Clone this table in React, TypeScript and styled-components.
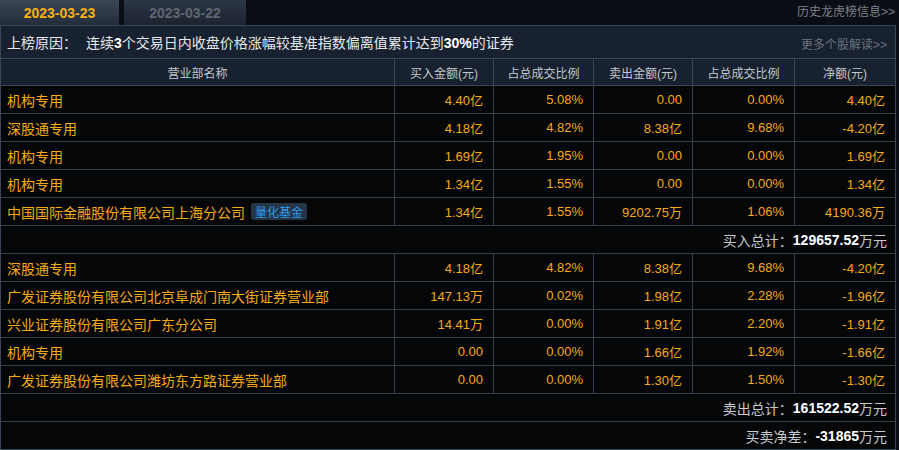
import React from "react";
import styled, { createGlobalStyle } from "styled-components";

const GlobalStyle = createGlobalStyle`
  html, body {
    margin: 0;
    padding: 0;
    background: #0a0d13;
  }
  body {
    font-family: "Liberation Sans", "Noto Sans CJK SC", sans-serif;
  }
`;

const Page = styled.div`
  width: 899px;
  height: 450px;
  background: #0a0d13;
  overflow: hidden;
`;

const TabBar = styled.div`
  height: 25px;
  display: flex;
  align-items: stretch;
  gap: 5px;
`;

const Tab = styled.div<{ active?: boolean }>`
  width: ${p => (p.active ? 119 : 122)}px;
  display: flex;
  align-items: center;
  justify-content: center;
  font-size: 14px;
  font-weight: bold;
  color: ${p => (p.active ? "#f5b014" : "#5f6670")};
  background: ${p =>
    p.active
      ? "linear-gradient(#3a4556, #232c3a)"
      : "linear-gradient(#2c3645, #1c2330)"};
`;

const HistoryLink = styled.a`
  margin-left: auto;
  padding-right: 4px;
  align-self: center;
  font-size: 12px;
  color: #7c828c;
  text-decoration: none;
  margin-top: -4px;
`;

const Panel = styled.div`
  width: 896px;
  box-sizing: border-box;
  border: 1px solid #3a4658;
  border-bottom: none;
  background: #040607;
`;

const ReasonRow = styled.div`
  height: 32px;
  display: flex;
  align-items: center;
  padding: 0 6px;
  background: #182130;
  border-bottom: 1px solid #3a4658;
  font-size: 14px;
  color: #e6e8ea;
`;

const ReasonLabel = styled.span`
  margin-right: 9px;
`;

const Strong = styled.b`
  color: #ffffff;
`;

const MoreLink = styled.a`
  margin-left: auto;
  font-size: 12px;
  color: #6a717c;
  text-decoration: none;
  padding-right: 2px;
  margin-top: 2px;
`;

const Grid = styled.div`
  display: grid;
  grid-template-columns: 394px 99px 100px 99px 102px 100px;
`;

const HeadCell = styled.div<{ last?: boolean }>`
  height: 26px;
  display: flex;
  align-items: center;
  justify-content: center;
  font-size: 12px;
  color: #c3c7cc;
  background: #182130;
  border-bottom: 1px solid #3a4658;
  border-right: ${p => (p.last ? "none" : "1px solid #3a4658")};
`;

const Cell = styled.div<{ last?: boolean; name?: boolean }>`
  height: 27px;
  display: flex;
  align-items: center;
  justify-content: ${p => (p.name ? "flex-start" : "flex-end")};
  padding: ${p => (p.name ? "0 0 0 6px" : "0 10px 0 0")};
  font-size: ${p => (p.name ? 14 : 13)}px;
  color: #f5aa18;
  border-bottom: 1px solid #343f4e;
  border-right: ${p => (p.last ? "none" : "1px solid #343f4e")};
`;

const Badge = styled.span`
  margin-left: 6px;
  height: 17px;
  padding: 0 4px;
  display: inline-flex;
  align-items: center;
  border-radius: 3px;
  background: #263546;
  color: #2c9ae8;
  font-size: 12px;
`;

const SummaryRow = styled.div`
  grid-column: 1 / -1;
  height: 27px;
  display: flex;
  align-items: center;
  justify-content: flex-end;
  padding-right: 8px;
  font-size: 14px;
  color: #c8cacd;
  border-bottom: 1px solid #343f4e;
`;

const Total = styled.b`
  color: #ffffff;
`;

interface IRow {
  name: string;
  badge?: string;
  buy: string;
  buyPct: string;
  sell: string;
  sellPct: string;
  net: string;
}

const buyRows: IRow[] = [
  { name: "机构专用", buy: "4.40亿", buyPct: "5.08%", sell: "0.00", sellPct: "0.00%", net: "4.40亿" },
  { name: "深股通专用", buy: "4.18亿", buyPct: "4.82%", sell: "8.38亿", sellPct: "9.68%", net: "-4.20亿" },
  { name: "机构专用", buy: "1.69亿", buyPct: "1.95%", sell: "0.00", sellPct: "0.00%", net: "1.69亿" },
  { name: "机构专用", buy: "1.34亿", buyPct: "1.55%", sell: "0.00", sellPct: "0.00%", net: "1.34亿" },
  {
    name: "中国国际金融股份有限公司上海分公司",
    badge: "量化基金",
    buy: "1.34亿",
    buyPct: "1.55%",
    sell: "9202.75万",
    sellPct: "1.06%",
    net: "4190.36万"
  }
];

const sellRows: IRow[] = [
  { name: "深股通专用", buy: "4.18亿", buyPct: "4.82%", sell: "8.38亿", sellPct: "9.68%", net: "-4.20亿" },
  { name: "广发证券股份有限公司北京阜成门南大街证券营业部", buy: "147.13万", buyPct: "0.02%", sell: "1.98亿", sellPct: "2.28%", net: "-1.96亿" },
  { name: "兴业证券股份有限公司广东分公司", buy: "14.41万", buyPct: "0.00%", sell: "1.91亿", sellPct: "2.20%", net: "-1.91亿" },
  { name: "机构专用", buy: "0.00", buyPct: "0.00%", sell: "1.66亿", sellPct: "1.92%", net: "-1.66亿" },
  { name: "广发证券股份有限公司潍坊东方路证券营业部", buy: "0.00", buyPct: "0.00%", sell: "1.30亿", sellPct: "1.50%", net: "-1.30亿" }
];

const headers = ["营业部名称", "买入金额(元)", "占总成交比例", "卖出金额(元)", "占总成交比例", "净额(元)"];

const DataRow: React.FC<{ row: IRow }> = ({ row }) => (
  <>
    <Cell name>
      {row.name}
      {row.badge && <Badge>{row.badge}</Badge>}
    </Cell>
    <Cell>{row.buy}</Cell>
    <Cell>{row.buyPct}</Cell>
    <Cell>{row.sell}</Cell>
    <Cell>{row.sellPct}</Cell>
    <Cell last>{row.net}</Cell>
  </>
);

const App: React.FC = () => {
  const [active, setActive] = React.useState(0);
  const dates = ["2023-03-23", "2023-03-22"];

  return (
    <Page>
      <GlobalStyle />
      <TabBar>
        {dates.map((d, i) => (
          <Tab key={d} active={i === active} onClick={() => setActive(i)}>
            {d}
          </Tab>
        ))}
        <HistoryLink href="#">历史龙虎榜信息&gt;&gt;</HistoryLink>
      </TabBar>
      <Panel>
        <ReasonRow>
          <ReasonLabel>上榜原因：</ReasonLabel>
          <span>
            连续<Strong>3</Strong>个交易日内收盘价格涨幅较基准指数偏离值累计达到
            <Strong>30%</Strong>的证券
          </span>
          <MoreLink href="#">更多个股解读&gt;&gt;</MoreLink>
        </ReasonRow>
        <Grid>
          {headers.map((h, i) => (
            <HeadCell key={i} last={i === headers.length - 1}>
              {h}
            </HeadCell>
          ))}
          {buyRows.map((r, i) => (
            <DataRow key={"b" + i} row={r} />
          ))}
          <SummaryRow>
            买入总计：<Total>129657.52</Total>万元
          </SummaryRow>
          {sellRows.map((r, i) => (
            <DataRow key={"s" + i} row={r} />
          ))}
          <SummaryRow>
            卖出总计：<Total>161522.52</Total>万元
          </SummaryRow>
          <SummaryRow>
            买卖净差：<Total>-31865</Total>万元
          </SummaryRow>
        </Grid>
      </Panel>
    </Page>
  );
};

export default App;
